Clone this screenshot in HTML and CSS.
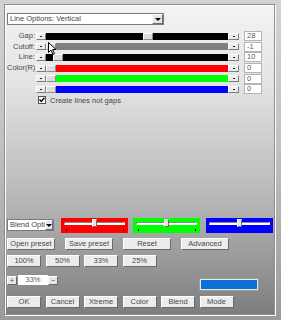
FILE: index.html
```html
<!DOCTYPE html>
<html lang="en">
<head>
  <meta charset="UTF-8">
  <meta name="viewport" content="width=device-width, initial-scale=1.0">
  <title>Line Options</title>
  <link rel="stylesheet" href="styles.css">
</head>
<body>
  <div class="frame">

    <!-- Top dropdown -->
    <div class="select main-select">
      <span class="select-text">Line Options: Vertical</span>
      <span class="select-btn"><span class="arrow"></span></span>
    </div>

    <!-- Sliders -->
    <div class="sliders">
      <div class="label">Gap:</div>
      <div class="slider">
        <span class="sbtn"><i></i></span>
        <span class="track black"><span class="thumb" style="left: 97px"></span></span>
        <span class="sbtn"><i></i></span>
      </div>
      <div class="num">28</div>

      <div class="label">Cutoff:</div>
      <div class="slider">
        <span class="sbtn"><i></i></span>
        <span class="track gray"><span class="thumb" style="left: 0"></span></span>
        <span class="sbtn"><i></i></span>
      </div>
      <div class="num">-1</div>

      <div class="label">Line:</div>
      <div class="slider">
        <span class="sbtn"><i></i></span>
        <span class="track black"><span class="thumb" style="left: 7px"></span></span>
        <span class="sbtn"><i></i></span>
      </div>
      <div class="num">10</div>

      <div class="label">Color(R):</div>
      <div class="slider">
        <span class="sbtn"><i></i></span>
        <span class="track red"><span class="thumb" style="left: 0"></span></span>
        <span class="sbtn"><i></i></span>
      </div>
      <div class="num">0</div>

      <div class="label"></div>
      <div class="slider">
        <span class="sbtn"><i></i></span>
        <span class="track green"><span class="thumb" style="left: 0"></span></span>
        <span class="sbtn"><i></i></span>
      </div>
      <div class="num">0</div>

      <div class="label"></div>
      <div class="slider">
        <span class="sbtn"><i></i></span>
        <span class="track blue"><span class="thumb" style="left: 0"></span></span>
        <span class="sbtn"><i></i></span>
      </div>
      <div class="num">0</div>

      <!-- mouse pointer over the Cutoff slider -->
      <svg class="cursor" width="9" height="13" viewBox="0 0 9 13">
        <path d="M0.5 0.5 L0.5 10.5 L3 8 L5 12.5 L6.5 11.8 L4.6 7.5 L8 7.5 Z" fill="#fff" stroke="#000" stroke-width="1"/>
      </svg>
    </div>

    <label class="check">
      <span class="box">
        <svg width="6" height="6" viewBox="0 0 6 6"><path d="M0.5 2.5 L2.3 4.5 L5.5 0.8" fill="none" stroke="#000" stroke-width="1.4"/></svg>
      </span>
      Create lines not gaps
    </label>

    <!-- Bottom controls -->
    <div class="bottom">
      <div class="blend-row">
        <div class="select blend-select">
          <span class="select-text">Blend Opti</span>
          <span class="select-btn"><span class="arrow"></span></span>
        </div>
        <div class="color-slider red"><span class="groove"></span><span class="knob"></span><span class="tick left"></span><span class="tick right"></span></div>
        <div class="color-slider green"><span class="groove"></span><span class="knob"></span><span class="tick left"></span><span class="tick right"></span></div>
        <div class="color-slider blue"><span class="groove"></span><span class="knob"></span><span class="tick left"></span><span class="tick right"></span></div>
      </div>

      <div class="btn-row wide">
        <button>Open preset</button>
        <button>Save preset</button>
        <button>Reset</button>
        <button>Advanced</button>
      </div>

      <div class="btn-row">
        <button>100%</button>
        <button>50%</button>
        <button>33%</button>
        <button>25%</button>
      </div>

      <div class="zoom-row">
        <div class="spin">
          <span class="spin-btn">+</span>
          <span class="spin-val">33%</span>
          <span class="spin-btn">&minus;</span>
        </div>
        <div class="preview"></div>
      </div>

      <div class="btn-row">
        <button>OK</button>
        <button>Cancel</button>
        <button>Xtreme</button>
        <button>Color</button>
        <button>Blend</button>
        <button>Mode</button>
      </div>
    </div>

  </div>
</body>
</html>
```

FILE: styles.css
```css
body {
  margin: 0;
  width: 281px;
  height: 320px;
  overflow: hidden;
  font-family: "Liberation Sans", Arial, sans-serif;
  font-size: 7.5px;
  color: #474747;
  background: linear-gradient(#d2d2d2, #c4c4c4 40%, #9a9a9a);
}
.frame {
  position: relative;
  box-sizing: border-box;
  margin: 4px;
  width: 271px;
  height: 311px;
  padding: 8px 0 6px 2px;
  border: 1px solid #8c8c8c;
  box-shadow: inset 1px 1px 0 #fff, 1px 1px 0 #fff;
  background: linear-gradient(#f3f3f3, #e4e4e4 25%, #b4b4b4 65%, #7e7e7e);
  display: flex;
  flex-direction: column;
}

/* dropdowns */
.select {
  box-sizing: border-box;
  display: flex;
  align-items: center;
  height: 12px;
  background: #fff;
  border: 1px solid #7a7a7a;
  overflow: hidden;
}
.main-select {
  width: 157px;
}
.select-text {
  flex: 1;
  padding-left: 2px;
  white-space: nowrap;
  line-height: 10px;
}
.select-btn {
  box-sizing: border-box;
  width: 11px;
  height: 10px;
  background: #e6e6e6;
  border: 1px solid;
  border-color: #fff #6e6e6e #6e6e6e #fff;
  display: flex;
  align-items: center;
  justify-content: center;
}
.arrow {
  width: 0;
  height: 0;
  border-left: 3px solid transparent;
  border-right: 3px solid transparent;
  border-top: 3px solid #000;
}

/* slider block */
.sliders {
  position: relative;
  margin-top: 6px;
  display: grid;
  grid-template-columns: 29px 203px 23px;
  grid-auto-rows: 10.6px;
  align-items: center;
}
.label {
  text-align: right;
  padding-right: 1px;
  line-height: 10px;
  white-space: nowrap;
}
.slider {
  display: flex;
  height: 7px;
}
.num {
  box-sizing: border-box;
  margin-left: 5px;
  height: 10px;
  line-height: 8px;
  padding-left: 2px;
  background: #fff;
  border: 1px solid #b4b4b4;
  color: #5a5a5a;
}
.sbtn {
  box-sizing: border-box;
  width: 10px;
  height: 7px;
  background: #ececec;
  border: 1px solid;
  border-color: #fff #7c7c7c #7c7c7c #fff;
  display: flex;
  align-items: center;
  justify-content: center;
}
.sbtn:last-child {
  width: 11px;
}
.sbtn i {
  width: 2px;
  height: 1px;
  background: #222;
}
.track {
  position: relative;
  width: 182px;
  height: 7px;
}
.track.black { background: #000; }
.track.gray { background: #808080; }
.track.red { background: #ff0000; }
.track.green { background: #00ff00; }
.track.blue { background: #0000ff; }
.thumb {
  position: absolute;
  top: 0;
  box-sizing: border-box;
  width: 10px;
  height: 7px;
  background: #dcdcdc;
  border: 1px solid;
  border-color: #fff #8a8a8a #8a8a8a #fff;
}
.cursor {
  position: absolute;
  left: 41px;
  top: 11px;
}

/* checkbox */
.check {
  display: flex;
  align-items: center;
  margin: 1px 0 0 31px;
  height: 9px;
}
.box {
  box-sizing: border-box;
  width: 8px;
  height: 8px;
  margin-right: 4px;
  background: #fff;
  border: 1px solid #555;
  display: flex;
  align-items: center;
  justify-content: center;
}

/* bottom part */
.bottom {
  margin-top: auto;
}
.blend-row {
  display: flex;
  align-items: center;
  height: 16px;
}
.blend-select {
  width: 47px;
  margin-right: 7px;
}
.blend-select .select-btn {
  width: 10px;
}
.color-slider {
  position: relative;
  width: 67px;
  height: 15px;
  margin-right: 5px;
}
.color-slider.red { background: #ff0000; }
.color-slider.green { background: #00ff00; }
.color-slider.blue { background: #0000ff; margin-right: 0; margin-left: 1px; }
.groove {
  position: absolute;
  left: 3px;
  right: 3px;
  top: 4px;
  height: 3px;
  box-sizing: border-box;
  background: #fff;
  border: 1px solid;
  border-color: #8a8a8a #fff #fff #8a8a8a;
}
.knob {
  position: absolute;
  left: 31px;
  top: 1px;
  width: 5px;
  height: 8px;
  box-sizing: border-box;
  background: #e8e8e8;
  border: 1px solid;
  border-color: #fff #6a6a6a #6a6a6a #fff;
}
.tick {
  position: absolute;
  top: 11px;
  width: 1px;
  height: 2px;
  background: #000;
}
.tick.left { left: 5px; }
.tick.right { right: 4px; }

/* buttons */
.btn-row {
  display: flex;
  gap: 4.5px;
  margin-top: 5px;
}
.btn-row button {
  box-sizing: border-box;
  width: 34px;
  height: 12px;
  padding: 0;
  font-family: inherit;
  font-size: 7.5px;
  color: #474747;
  background: #ececec;
  border: 1px solid;
  border-color: #fff #6a6a6a #6a6a6a #fff;
  line-height: 10px;
}
.btn-row.wide {
  gap: 10px;
}
.btn-row.wide button {
  width: 48px;
}

.zoom-row {
  display: flex;
  align-items: flex-start;
  height: 20px;
  margin-top: 4px;
}
.spin {
  display: flex;
  align-items: center;
  margin-top: 4px;
}
.spin-btn {
  box-sizing: border-box;
  width: 10px;
  height: 9px;
  background: #e6e6e6;
  border: 1px solid;
  border-color: #fff #6a6a6a #6a6a6a #fff;
  font-size: 7px;
  line-height: 7px;
  text-align: center;
}
.spin-btn:first-child {
  margin-right: 1px;
}
.spin-val {
  width: 30px;
  height: 10px;
  line-height: 10px;
  text-align: center;
  background: #fff;
  color: #5a5a5a;
}
.preview {
  box-sizing: border-box;
  margin: 8px 16px 0 auto;
  width: 58px;
  height: 11px;
  background: #0a72d6;
  border: 1px solid #e8e8e8;
  box-shadow: 0 0 0 1px #9a9a9a;
}
```
